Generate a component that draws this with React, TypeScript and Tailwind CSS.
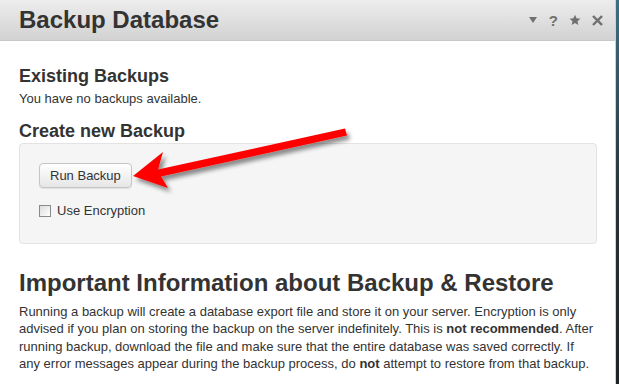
import React from 'react';

const FONT = { fontFamily: '"Liberation Sans", Arial, sans-serif' };

function HeaderIcons() {
  return (
    <div className="flex items-center gap-[11px] pr-[12px] text-[#707070]">
      <svg width="10" height="8" viewBox="0 0 10 8">
        <path d="M1 1 L9 1 L5 7 Z" fill="currentColor" />
      </svg>
      <span className="text-[15px] font-bold leading-none">?</span>
      <svg width="12" height="12" viewBox="0 0 24 24">
        <path d="M12 1.5 L15.1 8.6 L22.8 9.3 L17 14.4 L18.7 22 L12 18 L5.3 22 L7 14.4 L1.2 9.3 L8.9 8.6 Z" fill="currentColor" />
      </svg>
      <svg width="11" height="11" viewBox="0 0 12 12">
        <path d="M2 2 L10 10 M10 2 L2 10" stroke="currentColor" strokeWidth="2.6" strokeLinecap="square" />
      </svg>
    </div>
  );
}

function Arrow() {
  return (
    <svg className="absolute left-0 top-0 pointer-events-none" width="619" height="384" viewBox="0 0 619 384">
      <defs>
        <filter id="sh" x="-10%" y="-30%" width="130%" height="180%">
          <feDropShadow dx="3" dy="4" stdDeviation="2" floodColor="#000" floodOpacity="0.45" />
        </filter>
      </defs>
      <polygon
        points="133,176 163,152 158,169.5 345,128.5 347,135.5 161,176.5 168,188"
        fill="#ff0000"
        filter="url(#sh)"
      />
    </svg>
  );
}

export default function App() {
  return (
    <div className="relative w-[619px] h-[384px] flex overflow-hidden bg-white text-[#333]" style={FONT}>
      <div className="flex-1 min-w-0 flex flex-col border-r border-[#d0d0d0]">
        <div className="h-[41px] shrink-0 flex items-center justify-between bg-gradient-to-b from-[#ededed] to-[#d2d2d2] border-b border-[#c8c8c8]">
          <h1 className="pl-[19px] text-[24px] font-bold leading-none text-[#333]">Backup Database</h1>
          <HeaderIcons />
        </div>

        <div className="px-[19px] pr-[18px] min-w-0 overflow-hidden">
          <h2 className="mt-[25px] text-[18px] font-bold leading-[20px]">Existing Backups</h2>
          <p className="mt-[5px] text-[13px] leading-[16px]">You have no backups available.</p>

          <h2 className="mt-[14px] text-[18px] font-bold leading-[20px]">Create new Backup</h2>
          <div className="mt-[2px] h-[101px] rounded-[4px] border border-[#e3e3e3] bg-[#f5f5f5] px-[19px] pt-[19px]">
            <button className="h-[25px] px-[10px] rounded-[4px] border border-[#c5c5c5] bg-gradient-to-b from-white to-[#e6e6e6] text-[13px] leading-none text-[#333] shadow-[0_1px_1px_rgba(0,0,0,0.08)]">
              Run Backup
            </button>
            <label className="mt-[16px] flex items-center gap-[6px] text-[13px] leading-none">
              <span className="w-[12px] h-[12px] border border-[#8a8a8a] bg-gradient-to-br from-[#dcdcdc] to-white" />
              Use Encryption
            </label>
          </div>

          <h2 className="mt-[26px] text-[24px] font-bold leading-[26px]">Important Information about Backup &amp; Restore</h2>
          <p className="mt-[7px] text-[13px] leading-[17.4px] whitespace-nowrap">
            Running a backup will create a database export file and store it on your server. Encryption is only
            <br />
            advised if you plan on storing the backup on the server indefinitely. This is <b>not recommended</b>. After
            <br />
            running backup, download the file and make sure that the entire database was saved correctly. If
            <br />
            any error messages appear during the backup process, do <b>not</b> attempt to restore from that backup.
          </p>
        </div>
      </div>
      <div className="w-[3px] shrink-0 bg-gradient-to-b from-[#3d6f86] via-[#27343a] to-[#1d2326]" />
      <Arrow />
    </div>
  );
}
